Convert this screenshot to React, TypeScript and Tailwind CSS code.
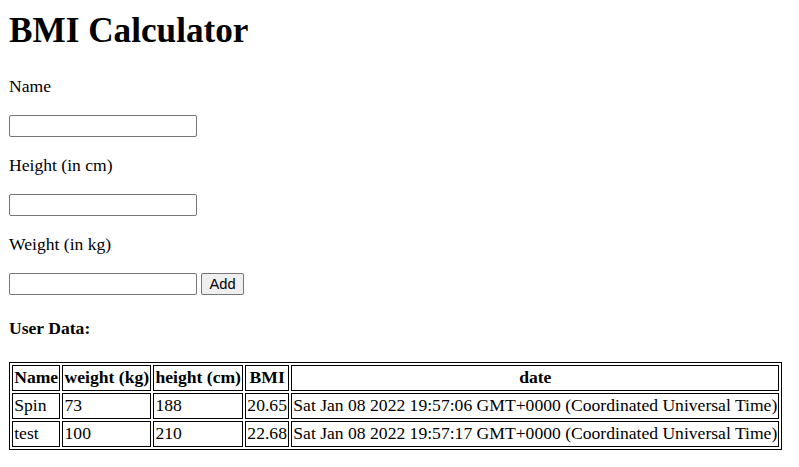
const rows = [
  { name: "Spin", weight: "73", height: "188", bmi: "20.65", date: "Sat Jan 08 2022 19:57:06 GMT+0000 (Coordinated Universal Time)" },
  { name: "test", weight: "100", height: "210", bmi: "22.68", date: "Sat Jan 08 2022 19:57:17 GMT+0000 (Coordinated Universal Time)" },
]

// page was captured at 110% zoom, so the browser defaults are scaled by 1.1
function TextInput() {
  return (
    <input
      type="text"
      className="block h-[22px] w-[188px] rounded-[2px] border border-[#767676] bg-white px-[2px] outline-none"
    />
  )
}

export default function App() {
  return (
    <div className="min-h-screen bg-white px-[9px] font-['Liberation_Serif',serif] text-[17.6px] text-black">
      <h1 className="pt-[11px] text-[35.2px] leading-[40px] font-bold">BMI Calculator</h1>

      <p className="mt-[25px] leading-[20px]">Name</p>
      <div className="mt-[19px]">
        <TextInput />
      </div>

      <p className="mt-[18px] leading-[20px]">Height (in cm)</p>
      <div className="mt-[19px]">
        <TextInput />
      </div>

      <p className="mt-[18px] leading-[20px]">Weight (in kg)</p>
      <div className="mt-[19px] flex items-center gap-1">
        <TextInput />
        <button className="h-[22px] w-[43px] rounded-[2px] border border-[#767676] bg-[#efefef] font-['Liberation_Sans',Arial,sans-serif] text-[14.67px] leading-none">
          Add
        </button>
      </div>

      <p className="mt-[23px] leading-[20px] font-bold">User Data:</p>

      <table className="mt-[24px] border-separate border-spacing-[2px] border border-black">
        <thead>
          <tr>
            {["Name", "weight (kg)", "height (cm)", "BMI", "date"].map((h) => (
              <th key={h} className="border border-black px-[1.2px] pt-0 pb-[2px] text-center leading-[22px] font-bold">
                {h}
              </th>
            ))}
          </tr>
        </thead>
        <tbody>
          {rows.map((r) => (
            <tr key={r.date}>
              {[r.name, r.weight, r.height, r.bmi, r.date].map((v, i) => (
                <td key={i} className="border border-black px-[1.2px] pt-0 pb-[2px] leading-[22px]">
                  {v}
                </td>
              ))}
            </tr>
          ))}
        </tbody>
      </table>
    </div>
  )
}
